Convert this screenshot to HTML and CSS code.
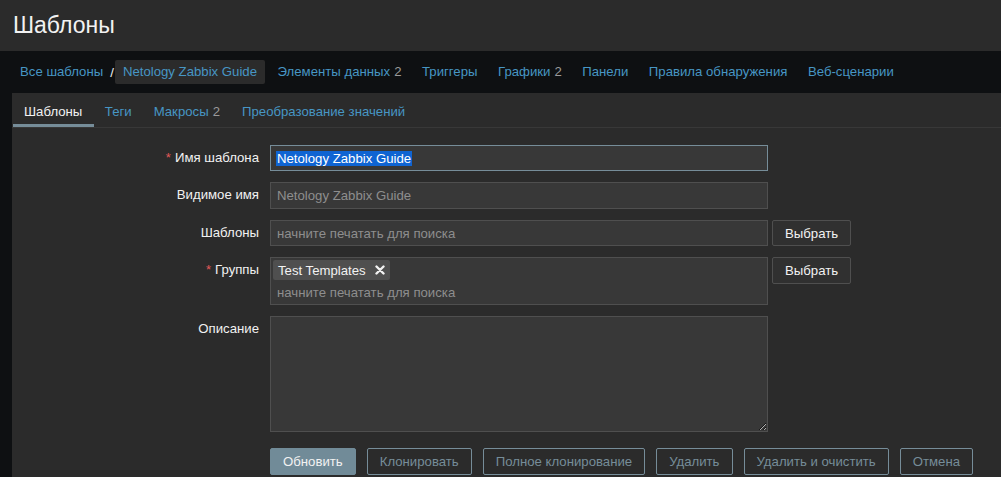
FILE: index.html
```html
<!DOCTYPE html>
<html lang="ru">
<head>
<meta charset="utf-8">
<title>Шаблоны</title>
<link rel="stylesheet" href="styles.css">
</head>
<body>
<header class="page-header">
  <h1 class="page-title">Шаблоны</h1>
</header>
<nav class="object-nav">
  <div class="breadcrumbs">
    <a class="nav-link" href="#">Все шаблоны</a>
    <span class="crumb-sep">/</span>
    <a class="nav-link nav-link-current" href="#">Netology Zabbix Guide</a>
  </div>
  <a class="nav-link" href="#">Элементы данных<span class="count">2</span></a>
  <a class="nav-link" href="#">Триггеры</a>
  <a class="nav-link" href="#">Графики<span class="count">2</span></a>
  <a class="nav-link" href="#">Панели</a>
  <a class="nav-link" href="#">Правила обнаружения</a>
  <a class="nav-link" href="#">Веб-сценарии</a>
</nav>
<main class="panel">
  <ul class="tabs">
    <li class="tab tab-active">Шаблоны</li>
    <li class="tab">Теги</li>
    <li class="tab">Макросы<span class="count">2</span></li>
    <li class="tab">Преобразование значений</li>
  </ul>
  <form class="form-grid">
    <label class="form-label required">Имя шаблона</label>
    <div class="form-field">
      <div class="text-input is-focused"><span class="selection">Netology Zabbix Guide</span></div>
    </div>

    <label class="form-label">Видимое имя</label>
    <div class="form-field">
      <input class="text-input" type="text" placeholder="Netology Zabbix Guide">
    </div>

    <label class="form-label">Шаблоны</label>
    <div class="form-field">
      <input class="text-input" type="text" placeholder="начните печатать для поиска">
      <button class="btn btn-grey" type="button">Выбрать</button>
    </div>

    <label class="form-label required">Группы</label>
    <div class="form-field">
      <div class="multiselect">
        <div class="chips">
          <span class="chip">Test Templates
            <svg class="chip-remove" width="10" height="10" viewBox="0 0 10 10"><path d="M1.5 1.5 L8.5 8.5 M8.5 1.5 L1.5 8.5" stroke="#f2f2f2" stroke-width="2.4" stroke-linecap="round"/></svg>
          </span>
        </div>
        <input class="ms-input" type="text" placeholder="начните печатать для поиска">
      </div>
      <button class="btn btn-grey" type="button">Выбрать</button>
    </div>

    <label class="form-label">Описание</label>
    <div class="form-field">
      <textarea class="textarea"></textarea>
    </div>

    <div class="form-actions">
      <button class="btn btn-primary" type="button">Обновить</button>
      <button class="btn btn-alt" type="button">Клонировать</button>
      <button class="btn btn-alt" type="button">Полное клонирование</button>
      <button class="btn btn-alt" type="button">Удалить</button>
      <button class="btn btn-alt" type="button">Удалить и очистить</button>
      <button class="btn btn-alt" type="button">Отмена</button>
    </div>
  </form>
</main>
</body>
</html>
```
FILE: styles.css
```css
html, body {
  margin: 0;
  padding: 0;
}
body {
  background: #0e1012;
  color: #f2f2f2;
  font-family: "Liberation Sans", Arial, sans-serif;
  font-size: 13.2px;
  min-height: 477px;
  overflow: hidden;
}

.page-header {
  height: 51px;
  background: #2b2b2b;
  padding-left: 13px;
}
.page-title {
  margin: 0;
  font-size: 23px;
  font-weight: normal;
  line-height: 51px;
  color: #f2f2f2;
}

.object-nav {
  height: 42px;
  display: flex;
  align-items: center;
  padding-left: 12px;
  gap: 4.5px;
}
.breadcrumbs {
  display: flex;
  align-items: center;
}
.crumb-sep {
  color: #f2f2f2;
  margin: 0 1px 0 -1px;
}
.nav-link {
  color: #4796c4;
  text-decoration: none;
  padding: 0 8px;
  line-height: 24px;
  border-radius: 2px;
  white-space: nowrap;
}
.nav-link-current {
  background: #2b2b2b;
}
.count {
  color: #9a9a9a;
  margin-left: 4px;
}

.panel {
  margin-left: 12px;
  background: #2b2b2b;
  min-height: 384px;
}

.tabs {
  display: flex;
  margin: 0;
  padding: 0 0 0 1px;
  list-style: none;
  border-bottom: 1px solid #383838;
}
.tab {
  padding: 11px 11px 4px;
  line-height: 16px;
  border-bottom: 3px solid transparent;
  color: #4796c4;
  white-space: nowrap;
}
.tab-active {
  color: #f2f2f2;
  border-bottom-color: #768d99;
  padding-right: 11.5px;
}

.form-grid {
  display: grid;
  grid-template-columns: 247px 1fr;
  column-gap: 11px;
  row-gap: 11px;
  padding-top: 17px;
  align-items: start;
}
.form-label {
  text-align: right;
  line-height: 26.4px;
  color: #f2f2f2;
  white-space: nowrap;
}
.required::before {
  content: "*";
  color: #e45959;
  margin-right: 4px;
}
.form-field {
  display: flex;
  align-items: flex-start;
  gap: 4px;
}

.text-input {
  box-sizing: border-box;
  width: 498px;
  height: 26.4px;
  margin: 0;
  padding: 0 6px;
  background: #383838;
  border: 1px solid #4f4f4f;
  color: #f2f2f2;
  font-family: inherit;
  font-size: 13.2px;
  outline: none;
}
.text-input::placeholder,
.ms-input::placeholder {
  color: #8e8e8e;
  opacity: 1;
}
.text-input.is-focused {
  display: flex;
  align-items: center;
  border-color: #768d99;
  padding-left: 5px;
}
.selection {
  background: #0f64d2;
  color: #ffffff;
  padding: 0 1px;
  line-height: 15px;
}

.multiselect {
  box-sizing: border-box;
  width: 498px;
  background: #383838;
  border: 1px solid #4f4f4f;
}
.chips {
  display: flex;
  padding: 2px 2px 0;
}
.chip {
  display: inline-flex;
  align-items: center;
  gap: 9px;
  height: 20px;
  padding: 0 5px;
  background: #4f4f4f;
  border-radius: 2px;
  color: #f2f2f2;
  white-space: nowrap;
}
.chip-remove {
  display: block;
}
.ms-input {
  display: block;
  box-sizing: border-box;
  width: 100%;
  height: 24px;
  margin: 0;
  padding: 0 6px;
  border: 0;
  background: transparent;
  color: #f2f2f2;
  font-family: inherit;
  font-size: 13.2px;
  outline: none;
}

.textarea {
  box-sizing: border-box;
  width: 498px;
  height: 116px;
  margin: 0;
  padding: 4px 6px;
  background: #383838;
  border: 1px solid #4f4f4f;
  color: #f2f2f2;
  font-family: inherit;
  font-size: 13.2px;
  resize: vertical;
  color-scheme: dark;
  outline: none;
}

.btn {
  box-sizing: border-box;
  height: 26.4px;
  margin: 0;
  padding: 0 12px;
  border: 1px solid;
  border-radius: 2px;
  font-family: inherit;
  font-size: 13.2px;
  white-space: nowrap;
  cursor: pointer;
}
.btn-grey {
  background: #303030;
  border-color: #4f4f4f;
  color: #f2f2f2;
}
.btn-primary {
  background: #718b98;
  border-color: #718b98;
  color: #f2f2f2;
}
.btn-alt {
  background: transparent;
  border-color: #768d99;
  color: #768d99;
}

.form-actions {
  grid-column: 2;
  display: flex;
  gap: 11px;
  margin-top: 5px;
}
```
